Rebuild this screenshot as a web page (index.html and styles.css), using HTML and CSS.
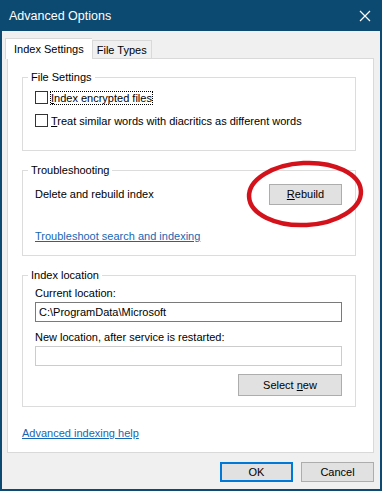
FILE: index.html
```html
<!DOCTYPE html>
<html lang="en">
<head>
    <meta charset="UTF-8">
    <title>Advanced Options</title>
    <link rel="stylesheet" href="styles.css">
</head>
<body>
    <div class="window">
        <div class="titlebar">
            <span class="title">Advanced Options</span>
            <svg class="close" width="12" height="12" viewBox="0 0 12 12">
                <path d="M1 1 L11 11 M11 1 L1 11" stroke="#ffffff" stroke-width="1.2" fill="none"/>
            </svg>
        </div>

        <div class="content">
            <div class="tabs">
                <div class="tab active">Index Settings</div>
                <div class="tab">File Types</div>
            </div>

            <div class="panel">
                <fieldset class="group group-files">
                    <legend>File Settings</legend>
                    <label class="check">
                        <span class="box"></span>
                        <span class="focus"><u>I</u>ndex encrypted files</span>
                    </label>
                    <label class="check">
                        <span class="box"></span>
                        <span><u>T</u>reat similar words with diacritics as different words</span>
                    </label>
                </fieldset>

                <fieldset class="group group-trouble">
                    <legend>Troubleshooting</legend>
                    <div class="rebuild-row">
                        <span>Delete and rebuild index</span>
                        <button class="btn"><u>R</u>ebuild</button>
                    </div>
                    <a class="link" href="#">Troubleshoot search and indexing</a>
                </fieldset>

                <fieldset class="group group-location">
                    <legend>Index location</legend>
                    <div class="field-label">Current location:</div>
                    <div class="textbox">C:\ProgramData\Microsoft</div>
                    <div class="field-label">New location, after service is restarted:</div>
                    <div class="textbox textbox-empty"></div>
                    <div class="select-row">
                        <button class="btn">Select <u>n</u>ew</button>
                    </div>
                </fieldset>

                <a class="link help-link" href="#">Advanced indexing help</a>
            </div>

            <div class="footer">
                <button class="btn btn-default">OK</button>
                <button class="btn">Cancel</button>
            </div>
        </div>

        <!-- hand drawn red circle over the Rebuild button -->
        <svg class="mark" width="124" height="72" viewBox="0 0 124 72">
            <ellipse cx="62" cy="36" rx="56" ry="31" transform="rotate(-3 62 36)" fill="none" stroke="#d4121c" stroke-width="4.5"/>
        </svg>
    </div>
</body>
</html>
```

FILE: styles.css
```css
* {
    box-sizing: border-box;
}

body {
    margin: 0;
    font-family: 'Liberation Sans', Arial, sans-serif;
    font-size: 11px;
    color: #000000;
}

.window {
    position: relative;
    width: 382px;
    height: 491px;
    background: #f0f0f0;
    border: 2px solid #0c4a72;
    border-top: none;
}

.titlebar {
    height: 31px;
    margin: 0 -2px;
    background: #0c4a72;
    color: #ffffff;
    display: flex;
    align-items: center;
    justify-content: space-between;
    padding: 0 11px 0 9px;
}

.title {
    font-size: 12.5px;
}

.content {
    padding: 7px 6px 0 3px;
}

.tabs {
    display: flex;
    align-items: flex-end;
    height: 20px;
    position: relative;
    z-index: 1;
}

.tab {
    height: 18px;
    padding: 0 4px;
    border: 1px solid #d9d9d9;
    border-bottom: none;
    background: #f0f0f0;
    display: flex;
    align-items: center;
}

.tab.active {
    height: 21px;
    margin-bottom: -1px;
    padding: 0 8px;
    background: #ffffff;
    border-right: none;
}

.panel {
    margin-left: 2px;
    height: 395px;
    background: #ffffff;
    border: 1px solid #d9d9d9;
    padding: 11px 17px 0 14px;
    display: flex;
    flex-direction: column;
}

.group {
    margin: 0 0 12px 0;
    padding: 0 12px;
    border: 1px solid #dcdcdc;
    min-width: 0;
}

.group legend {
    padding: 0 3px;
    margin-left: -7px;
    line-height: 14px;
}

.group-files {
    height: 81px;
    padding-top: 2px;
}

.check {
    display: flex;
    align-items: center;
    height: 23px;
}

.box {
    width: 13px;
    height: 13px;
    border: 1px solid #333333;
    margin-right: 3px;
    background: #ffffff;
}

.focus {
    outline: 1px dotted #000000;
    outline-offset: 0;
}

.group-trouble {
    height: 93px;
    padding-top: 6px;
}

.rebuild-row {
    display: flex;
    align-items: center;
    justify-content: space-between;
    padding-right: 1px;
    height: 22px;
}

.btn {
    font-family: inherit;
    font-size: 11px;
    color: #000000;
    background: #e1e1e1;
    border: 1px solid #adadad;
    width: 73px;
    height: 21px;
    padding: 0;
}

.btn-default {
    border: 2px solid #0078d7;
}

.link {
    color: #1766b3;
    display: inline-block;
    margin-top: 25px;
}

.group-location {
    height: 139px;
    padding-top: 4px;
}

.field-label {
    height: 16px;
    line-height: 15px;
}

.textbox {
    height: 20px;
    border: 1px solid #7a7a7a;
    line-height: 18px;
    padding: 0 3px;
    margin-right: 1px;
    margin-bottom: 8px;
}

.textbox-empty {
    border-color: #cccccc;
}

.select-row {
    display: flex;
    justify-content: flex-end;
    padding-right: 1px;
}

.select-row .btn {
    width: 104px;
    height: 22px;
}

.help-link {
    margin-top: 8px;
    align-self: flex-start;
}

.footer {
    display: flex;
    justify-content: flex-end;
    gap: 8px;
    padding-top: 9px;
}

.footer .btn {
    height: 20px;
}

.mark {
    position: absolute;
    left: 241px;
    top: 158px;
}
```
